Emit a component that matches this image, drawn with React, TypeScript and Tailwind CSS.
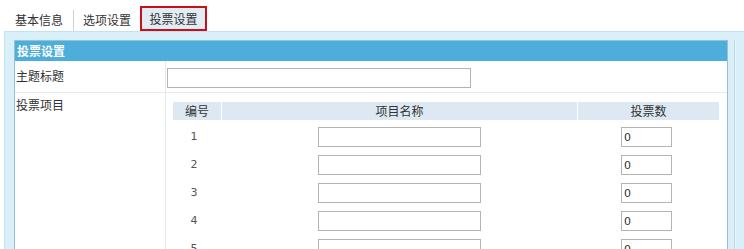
import React from "react";

const rows = [1, 2, 3, 4, 5];

export default function App() {
  return (
    <div
      className="w-[744px] h-[249px] overflow-hidden bg-white text-[12px] text-[#333]"
      style={{ fontFamily: '"Noto Sans CJK SC", "Liberation Sans", sans-serif' }}
    >
      {/* tabs */}
      <div className="flex h-[25px] mt-[6px] items-stretch leading-none">
        <div className="flex items-center pl-[15px] pr-[10px] pt-[3px]">基本信息</div>
        <div className="w-px bg-[#c9d3da] mt-[4px]" />
        <div className="flex items-center pl-[9px] pr-[9px] pt-[3px]">选项设置</div>
        <div className="flex items-center justify-center w-[67px] border-2 border-[#c9101a] bg-[#e2ecf3] pt-[1px]">
          投票设置
        </div>
      </div>

      {/* frame */}
      <div className="ml-[4px] h-[300px] bg-[#d9eff9] border-t border-l border-[#c3e2f1] pt-[8px] pl-[9px] flex">
        <div className="w-[714px] bg-white border-l border-t border-r border-[#94c2da] flex flex-col">
          <div className="h-[20px] bg-[#4eaedb] text-white font-bold flex items-center pl-[2px] leading-none">
            投票设置
          </div>

          <div className="flex h-[32px] border-b border-[#e2eaf0]">
            <div className="w-[151px] border-r border-[#e2eaf0] flex items-center pl-[1px] pb-[2px]">主题标题</div>
            <div className="flex items-center pl-[1px] pt-[2px]">
              <input className="w-[304px] h-[20px] border border-[#b3b3b3] bg-white outline-none" />
            </div>
          </div>

          <div className="flex flex-1">
            <div className="w-[151px] border-r border-[#e2eaf0] pl-[1px] pt-[3px]">投票项目</div>
            <div className="pl-[7px] pt-[9px]">
              <div className="flex h-[18px] leading-none">
                <div className="w-[48px] bg-[#dde8f2] flex items-center justify-center">编号</div>
                <div className="w-[355px] ml-px bg-[#dde8f2] flex items-center justify-center">项目名称</div>
                <div className="w-[141px] ml-px bg-[#dde8f2] flex items-center justify-center">投票数</div>
              </div>
              <div className="mt-[3px] flex flex-col">
                {rows.map((n) => (
                  <div key={n} className="flex h-[28px] items-center">
                    <div
                      className="w-[48px] text-center text-[#555] pr-[6px]"
                      style={{ fontFamily: '"DejaVu Sans", sans-serif', fontSize: "11px" }}
                    >
                      {n}
                    </div>
                    <div className="w-[356px] flex justify-center">
                      <input className="w-[163px] h-[20px] border border-[#b3b3b3] bg-white outline-none" />
                    </div>
                    <div className="w-[142px] flex pl-[44px]">
                      <input
                        defaultValue="0"
                        className="w-[51px] h-[20px] border border-[#b3b3b3] bg-white outline-none pl-[2px] text-[11px] text-[#333]"
                        style={{ fontFamily: '"DejaVu Sans", sans-serif' }}
                      />
                    </div>
                  </div>
                ))}
              </div>
            </div>
          </div>
        </div>
        <div className="w-[6px]" />
        <div className="w-[2px] bg-[#eef8fc] border-l border-[#b9d9ea]" />
      </div>
    </div>
  );
}
